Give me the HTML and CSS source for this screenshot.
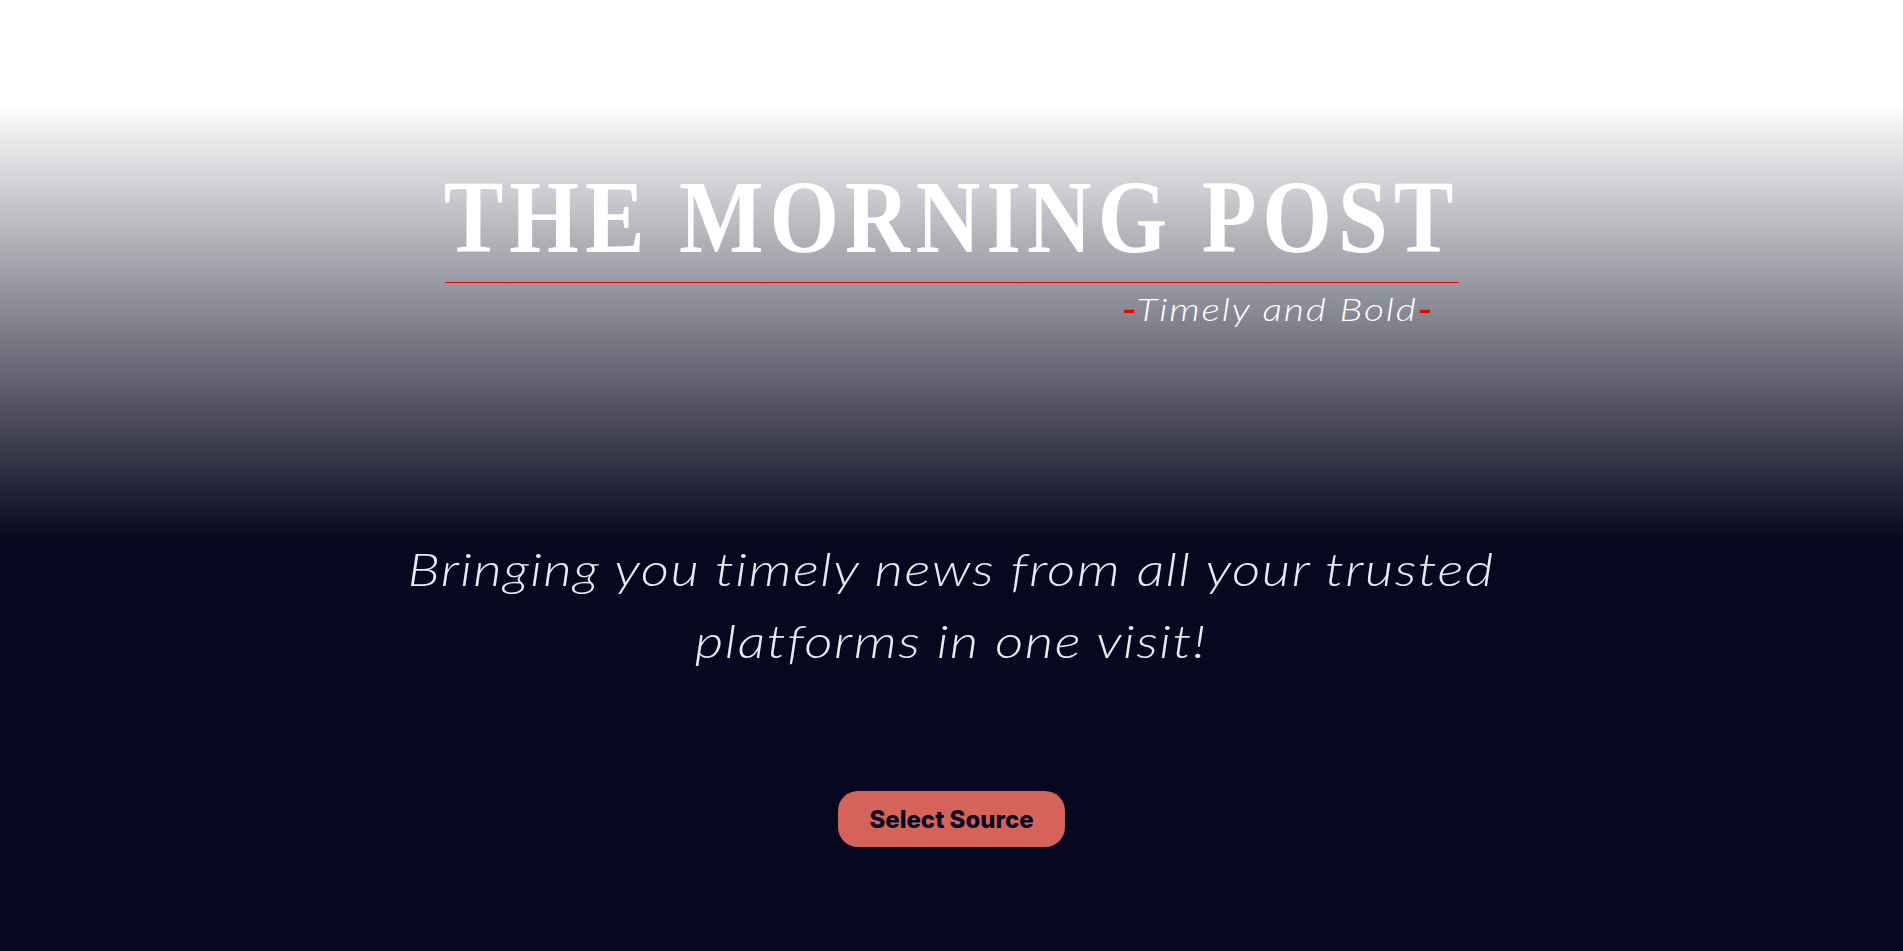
FILE: index.html
```html
<!DOCTYPE html>
<html lang="en">
<head>
<meta charset="utf-8">
<title>The Morning Post</title>
<link rel="stylesheet" href="styles.css">
</head>
<body>
<main class="hero">
  <header class="masthead">
    <div class="title-wrap">
      <h1 class="title">THE MORNING POST</h1>
    </div>
    <p class="tagline"><span class="dash">-</span>Timely and Bold<span class="dash">-</span></p>
  </header>
  <p class="intro">Bringing you timely news from all your trusted<br>platforms in one visit!</p>
  <button class="cta" type="button">Select Source</button>
</main>
</body>
</html>
```
FILE: styles.css
```css
html, body {
  margin: 0;
  padding: 0;
}
body {
  min-height: 100vh;
  background: linear-gradient(to bottom, #ffffff 0, #ffffff 103px, #07071f 540px, #07071f 100%);
  font-family: "Lato", "Open Sans", sans-serif;
  color: #ffffff;
}
.hero {
  display: flex;
  flex-direction: column;
  align-items: center;
  padding-top: 157px;
}
.masthead {
  width: 1014px;
  display: flex;
  flex-direction: column;
}
.title-wrap {
  border-bottom: 1px solid #ee0000;
  padding-bottom: 5px;
  display: flex;
  justify-content: center;
}
.title {
  margin: 0;
  font-family: "Liberation Serif", "Times New Roman", serif;
  font-weight: 700;
  font-size: 104px;
  line-height: 120px;
  letter-spacing: 7px;
  white-space: nowrap;
  color: #ffffff;
  transform: scaleX(0.86);
}
.tagline {
  margin: 6px 26px 0 0;
  align-self: flex-end;
  font-style: italic;
  font-weight: 300;
  font-size: 32px;
  line-height: 40px;
  letter-spacing: 1.5px;
  color: #ffffff;
  transform: scaleX(1.22);
  transform-origin: right center;
}
.dash {
  color: #ee0000;
  font-weight: 700;
  font-style: normal;
  letter-spacing: 0;
}
.intro {
  margin: 204px 0 0;
  text-align: center;
  font-style: italic;
  font-weight: 300;
  font-size: 46px;
  line-height: 72px;
  letter-spacing: 1.2px;
  color: #e9e9ef;
  transform: scaleX(1.2);
}
.cta {
  margin-top: 114px;
  width: 227px;
  height: 56px;
  border: none;
  border-radius: 20px;
  background: #d6625c;
  color: #07071f;
  font-family: "Inter", "Lato", sans-serif;
  font-weight: 800;
  font-size: 24px;
  cursor: pointer;
}
```
